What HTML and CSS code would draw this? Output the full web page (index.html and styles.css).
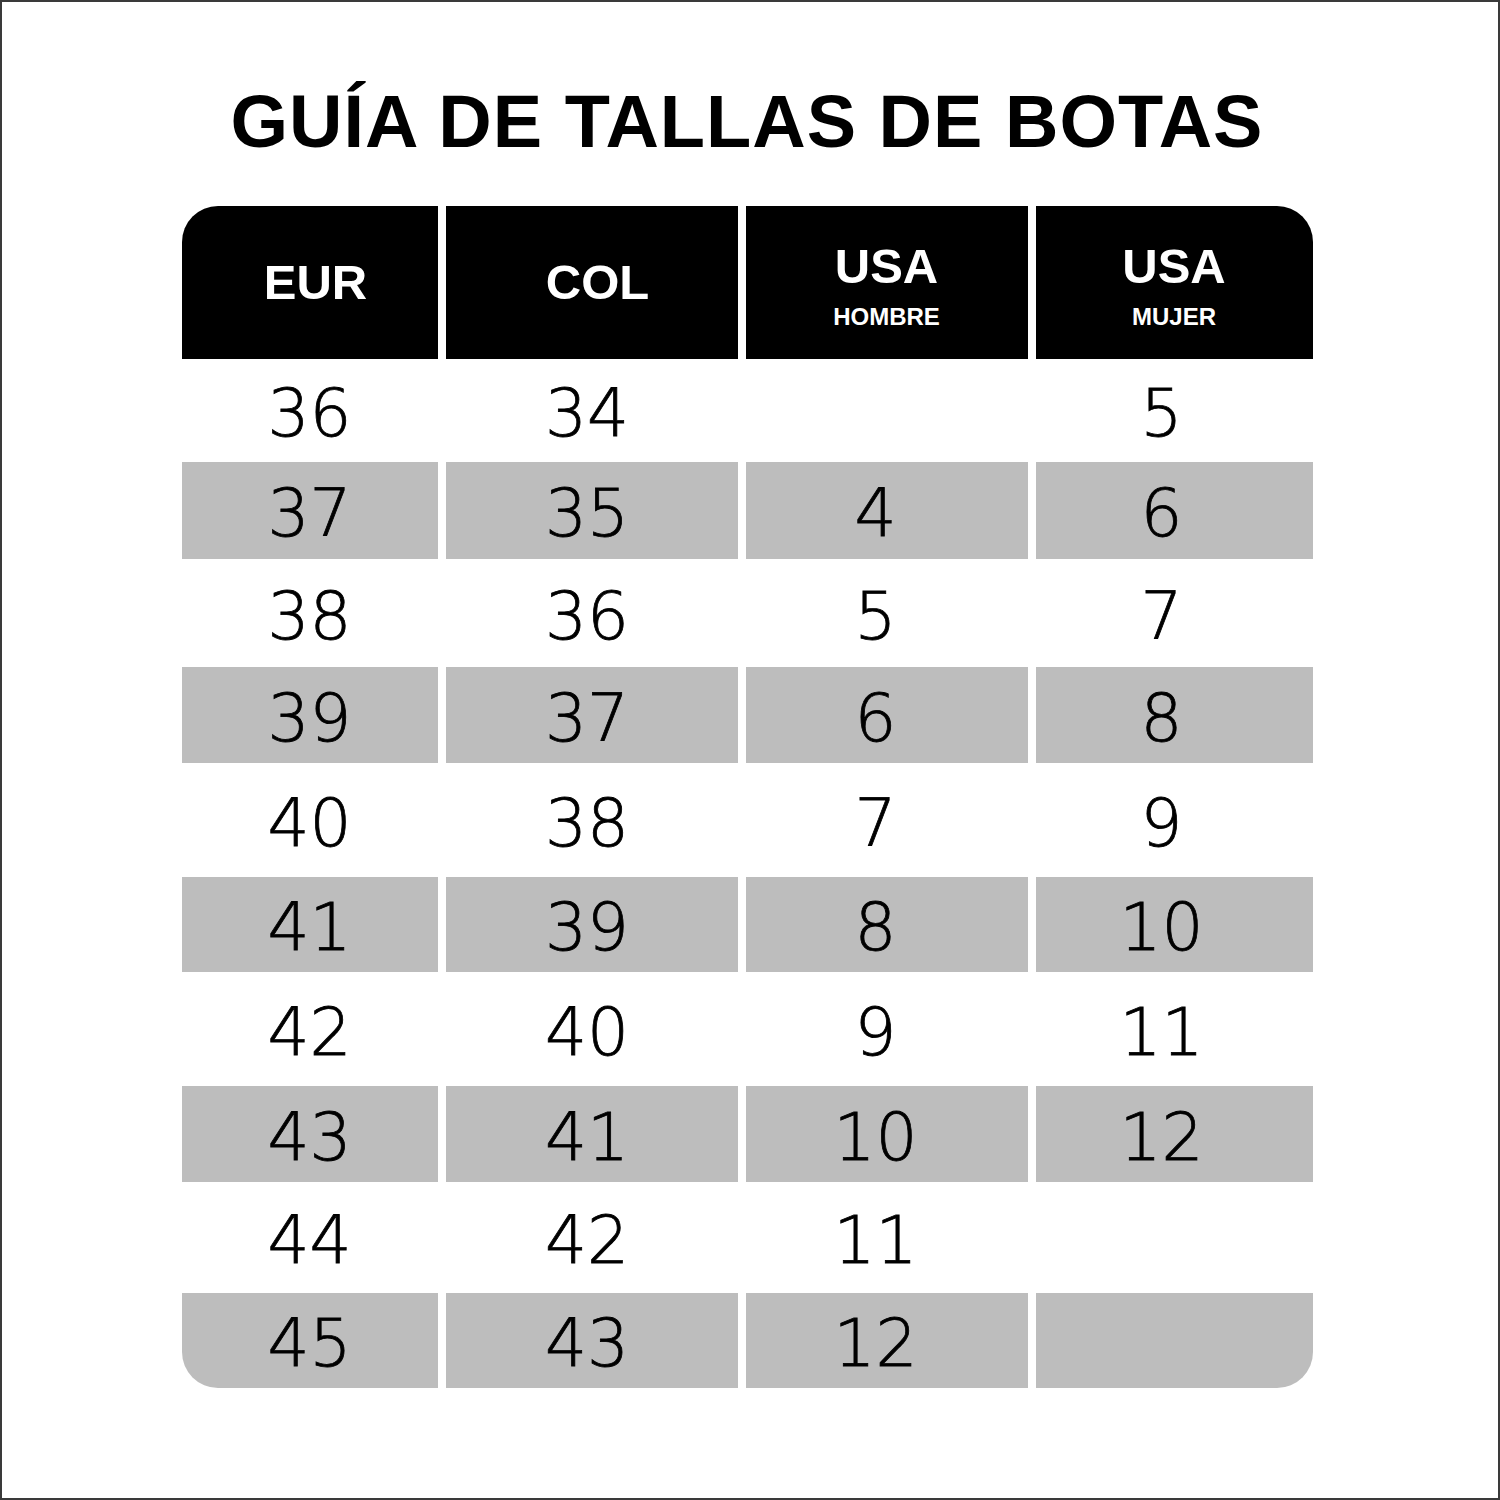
FILE: index.html
```html
<!DOCTYPE html>
<html lang="es">
<head>
<meta charset="utf-8">
<title>Guía de tallas de botas</title>
<link rel="stylesheet" href="styles.css">
</head>
<body>
<div class="page">
  <h1 class="title">GUÍA DE TALLAS DE BOTAS</h1>
  <div class="chart">
    <div class="hd hd-first h1c"><span class="hd-main">EUR</span></div>
    <div class="hd h2c"><span class="hd-main">COL</span></div>
    <div class="hd hd-stack"><span class="hd-main">USA</span><span class="hd-sub">HOMBRE</span></div>
    <div class="hd hd-stack hd-last"><span class="hd-main">USA</span><span class="hd-sub">MUJER</span></div>

    <div class="cell c1">36</div><div class="cell c2">34</div><div class="cell c3"></div><div class="cell c4">5</div>
    <div class="cell c1 alt">37</div><div class="cell c2 alt">35</div><div class="cell c3 alt">4</div><div class="cell c4 alt">6</div>
    <div class="cell c1">38</div><div class="cell c2">36</div><div class="cell c3">5</div><div class="cell c4">7</div>
    <div class="cell c1 alt">39</div><div class="cell c2 alt">37</div><div class="cell c3 alt">6</div><div class="cell c4 alt">8</div>
    <div class="cell c1">40</div><div class="cell c2">38</div><div class="cell c3">7</div><div class="cell c4">9</div>
    <div class="cell c1 alt">41</div><div class="cell c2 alt">39</div><div class="cell c3 alt">8</div><div class="cell c4 alt">10</div>
    <div class="cell c1">42</div><div class="cell c2">40</div><div class="cell c3">9</div><div class="cell c4">11</div>
    <div class="cell c1 alt">43</div><div class="cell c2 alt">41</div><div class="cell c3 alt">10</div><div class="cell c4 alt">12</div>
    <div class="cell c1">44</div><div class="cell c2">42</div><div class="cell c3">11</div><div class="cell c4"></div>
    <div class="cell c1 alt corner-bl">45</div><div class="cell c2 alt">43</div><div class="cell c3 alt">12</div><div class="cell c4 alt corner-br"></div>
  </div>
</div>
</body>
</html>
```

FILE: styles.css
```css
html, body {
  margin: 0;
  padding: 0;
  background: #ffffff;
}

.page {
  box-sizing: border-box;
  width: 1500px;
  height: 1500px;
  border: 2px solid #3a3a3a;
  background: #ffffff;
  display: flex;
  flex-direction: column;
  align-items: center;
  padding-top: 83px;
}

.title {
  margin: 0 6px 47px 0;
  font-family: "Liberation Sans", Arial, sans-serif;
  font-weight: 700;
  font-size: 74px;
  line-height: 74px;
  letter-spacing: 1px;
  color: #000;
  white-space: nowrap;
}

.chart {
  display: grid;
  grid-template-columns: 256px 292px 282px 277px;
  grid-template-rows: 153px 103px 97px 108px 96px 114px 95px 114px 96px 111px 95px;
  column-gap: 8px;
  margin-right: 6px;
}

.hd {
  background: #000;
  color: #fff;
  display: flex;
  flex-direction: column;
  align-items: center;
  justify-content: center;
  font-family: "Liberation Sans", Arial, sans-serif;
  font-weight: 700;
}

.hd-first { border-top-left-radius: 36px; }
.hd-last { border-top-right-radius: 36px; }
.h1c { padding-left: 12px; }
.h2c { padding-left: 12px; }
.hd-stack { padding-top: 6px; }

.hd-main {
  font-size: 49px;
  line-height: 49px;
}

.hd-sub {
  font-size: 24px;
  line-height: 24px;
  margin-top: 14px;
}

.cell {
  display: flex;
  align-items: center;
  justify-content: center;
  font-family: "DejaVu Sans", "Liberation Sans", sans-serif;
  font-weight: 200;
  font-size: 66px;
  color: #000;
  -webkit-text-stroke: 0.8px #000;
  padding-top: 6px;
}

.alt { background: #bdbdbd; }

.c1 { padding-right: 0; }
.c2 { padding-right: 9px; }
.c3 { padding-right: 22px; }
.c4 { padding-right: 25px; }

.corner-bl { border-bottom-left-radius: 36px; }
.corner-br { border-bottom-right-radius: 36px; }
```
